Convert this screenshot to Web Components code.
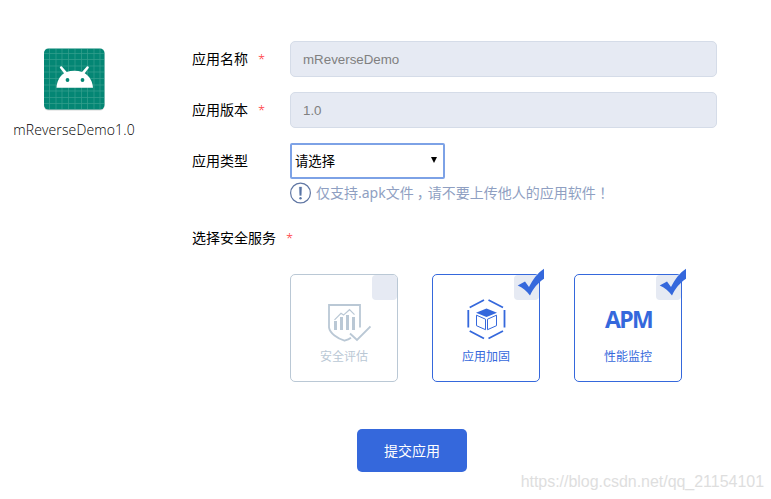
<!DOCTYPE html>
<html lang="zh-CN">
<head>
<meta charset="utf-8">
<title>提交应用</title>
<style>
body { margin: 0; background: #fff; color: #000; font: 14px/20px "Noto Sans", "Noto Sans CJK SC", sans-serif; }
</style>
</head>
<body>
<submit-page></submit-page>
<script>
const define = (name, html, setup) => customElements.define(name, class extends HTMLElement {
  constructor() {
    super();
    const t = document.createElement('template');
    t.innerHTML = html;
    this.attachShadow({ mode: 'open' }).append(t.content.cloneNode(true));
  }
  connectedCallback() { if (setup) setup(this, this.shadowRoot); }
});

define('app-badge', `
<style>
:host { display: flex; flex-direction: column; align-items: center; width: 148px; padding-top: 46px; box-sizing: border-box; }
svg { display: block; }
span { margin-top: 8px; font: 350 14px/20px "Open Sans", "Noto Sans", sans-serif; letter-spacing: .13px; white-space: nowrap; color: #000; }
</style>
<svg width="64" height="66" viewBox="0 0 64 66">
  <rect x="2" y="3.500" width="60.500" height="61" rx="4.500" fill="#000" opacity=".16"/>
  <rect x="2" y="2.500" width="60.500" height="61" rx="4.500" fill="#048674"/>
  <path d="M7.500 3v60M14 3v60M20 3v60M26.500 3v60M33 3v60M39.500 3v60M45.500 3v60M52 3v60M58 3v60M2 7.500h60M2 13.500h60M2 20h60M2 26h60M2 32.500h60M2 39h60M2 45h60M2 51.500h60M2 57.500h60" stroke="#4dab9b" stroke-width=".75" opacity=".65"/>
  <path d="M14.500 41.800c.3-6 3-11.500 7.500-14.500l-4-5.200c-.7-1.200 1.200-2.400 2.100-1.300l4.600 5.200c4.700-1.700 10.600-1.700 15.300 0l4.600-5.200c.9-1.100 2.800.1 2.100 1.300l-4 5.200c5 3 8 8.500 8.300 14.500z" fill="#fff"/>
  <circle cx="25.500" cy="34" r="1.900" fill="#048674"/><circle cx="40.500" cy="34" r="1.900" fill="#048674"/>
</svg>
<span><slot></slot></span>`);

define('form-row', `
<style>
:host { display: grid; grid-template-columns: 98px 427px; align-items: start; }
.label { display: flex; height: var(--row-height, 36px); align-items: center; white-space: nowrap; }
i { font: 300 13px/20px "Open Sans", sans-serif; color: #f22; margin-left: 10px; margin-top: -1px; display: none; }
:host([required]) i { display: block; }
</style>
<div class="label"><span></span><i>*</i></div><slot></slot>`,
(el, root) => { root.querySelector('span').textContent = el.getAttribute('label'); });

define('read-field', `
<style>
:host { display: flex; align-items: center; box-sizing: border-box; height: 36px; padding-left: 12px; border: 1px solid #d5dce8; border-radius: 5px; background: #e6eaf3; color: #808080; font: 13.33px/18px "Liberation Sans", sans-serif; }
span { padding-top: 1px; }
</style>
<span><slot></slot></span>`);

define('type-select', `
<style>
:host { display: flex; align-items: center; justify-content: space-between; box-sizing: border-box; width: 155px; height: 36px; padding: 0 6px 0 3px; border: 2px solid #7da2e6; border-radius: 2px; font-size: 13.33px; line-height: 18px; }
svg { display: block; margin-top: -3px; }
</style>
<span><slot></slot></span>
<svg width="6" height="6"><path d="M0 0h6L3 6z"/></svg>`);

define('file-hint', `
<style>
:host { display: flex; align-items: center; gap: 4px; height: 22px; margin-top: 3px; color: #8f9fc2; white-space: nowrap; }
svg { display: block; flex: none; margin-top: -1px; }
.text { margin-top: -2px; }
.c { margin-left: 3px; letter-spacing: -3px; }
.p { font-family: "Noto Sans CJK TC"; }
</style>
<svg width="22" height="22" viewBox="0 0 22 22"><circle cx="10.500" cy="11" r="9.900" fill="none" stroke="#5f76a3" stroke-width="1.200"/><path d="M9.300 5h2.400l-.4 8.500H9.700z" fill="#5874a5" stroke="#5874a5" stroke-width=".3"/><circle cx="10.500" cy="16.200" r="1.200" fill="#5874a5"/></svg>
<span class="text">仅支持.apk文件<span class="c">，</span>请不要上传他人的应用软件<span class="p" lang="zh-TW">！</span></span>`);

define('service-card', `
<style>
:host { display: flex; flex-direction: column; align-items: center; position: relative; box-sizing: border-box; width: 108px; height: 108px; padding-top: 21px; border: 1px solid #3568dc; border-radius: 5px; color: #3568dc; font-size: 12px; line-height: 18px; }
:host([off]) { border-color: #bac8d5; color: #bac8d5; }
.icon { height: 50px; display: flex; align-items: center; justify-content: center; margin-bottom: 2px; }
.mark { position: absolute; right: 0; top: 0; width: 25px; height: 25px; background: #e6eaf3; border-radius: 4px; }
.mark svg { position: absolute; left: 3px; top: -7px; }
:host([off]) .mark svg { display: none; }
</style>
<div class="mark"><svg width="28" height="29" viewBox="0 0 28 29"><path d="M.7 17.500L8 13.500l4 5.500C16 11.500 20.500 5 27 .8v10C21 15 16.500 20 13 27.500 9.500 23 5.500 19.500.7 17.500z" fill="#3568dc"/></svg></div>
<div class="icon"><slot name="icon"></slot></div>
<span><slot></slot></span>`);

define('shield-icon', `
<style>:host { display: block; } svg { display: block; }</style>
<svg width="54" height="50" viewBox="-2 0 54 50" fill="none" stroke="#bac8d5">
<path d="M41 31.500V9H10v22.500c1 6 8.500 11 15.500 13.200 2.500-.7 5-1.800 6.500-3" stroke-width="1.800"/>
<path d="M31 37.500l7 6.500L51.500 30.500" stroke-width="1.900"/>
<path d="M16.500 25v9M22.500 21v13M28.500 19v15M34.500 21v13" stroke-width="3"/>
<path d="M15.500 23.800l6.500-6.500 2.500 1.800 6-5.400 5 5" stroke-width="1.200"/></svg>`);

define('cube-icon', `
<style>:host { display: block; } svg { display: block; }</style>
<svg width="50" height="50" viewBox="0 0 50 50" fill="none" stroke="#3568dc">
<path d="M8.700 11.500L23 4M27.500 4l14.500 7.500M43.500 14v17.500M42 35L27.500 42.500M23 42.500L8.700 35M7.300 31.500V14" stroke-width="1.800"/>
<path d="M15 16.700L25.500 12.500l10.500 4.200L25.500 21z" fill="#3568dc" stroke="none"/>
<path d="M15.500 19.200l9 4v10.500l-9-4zM35.500 19.200l-9 4v10.500l9-4z" stroke-width="1"/></svg>`);

define('apm-mark', `
<style>:host { display: block; font: 700 23px/24px "Open Sans", sans-serif; letter-spacing: -1.6px; margin: -4px 0 0 1px; }</style>APM`);

define('submit-button', `
<style>
:host { display: flex; justify-content: center; align-items: center; width: 110px; height: 43px; border-radius: 5px; background: #3568dc; color: #fff; font-size: 14px; }
</style><slot></slot>`);

define('water-mark', `
<style>
:host { position: absolute; right: 7px; bottom: 7px; font: 16px/20px "Liberation Sans", sans-serif; letter-spacing: -.03px; color: #dedede; white-space: nowrap; }
</style><slot></slot>`);

define('submit-page', `
<style>
:host { display: flex; gap: 44px; position: relative; width: 771px; height: 499px; overflow: hidden; }
main { display: flex; flex-direction: column; padding-top: 41px; gap: 15px; width: 525px; }
.services { --row-height: 20px; margin-top: 9px; }
.cards { display: flex; gap: 34px; margin: 11px 0 0 98px; }
submit-button { margin: 32px 0 0 165px; }
</style>
<app-badge>mReverseDemo1.0</app-badge>
<main>
<form-row label="应用名称" required><read-field>mReverseDemo</read-field></form-row>
<form-row label="应用版本" required><read-field>1.0</read-field></form-row>
<form-row label="应用类型"><div><type-select>请选择</type-select><file-hint></file-hint></div></form-row>
<form-row class="services" label="选择安全服务" required></form-row>
<div class="cards">
<service-card off><shield-icon slot="icon"></shield-icon>安全评估</service-card>
<service-card><cube-icon slot="icon"></cube-icon>应用加固</service-card>
<service-card><apm-mark slot="icon"></apm-mark>性能监控</service-card>
</div>
<submit-button>提交应用</submit-button>
</main>
<water-mark>https://blog.csdn.net/qq_21154101</water-mark>`);
</script>
</body>
</html>
